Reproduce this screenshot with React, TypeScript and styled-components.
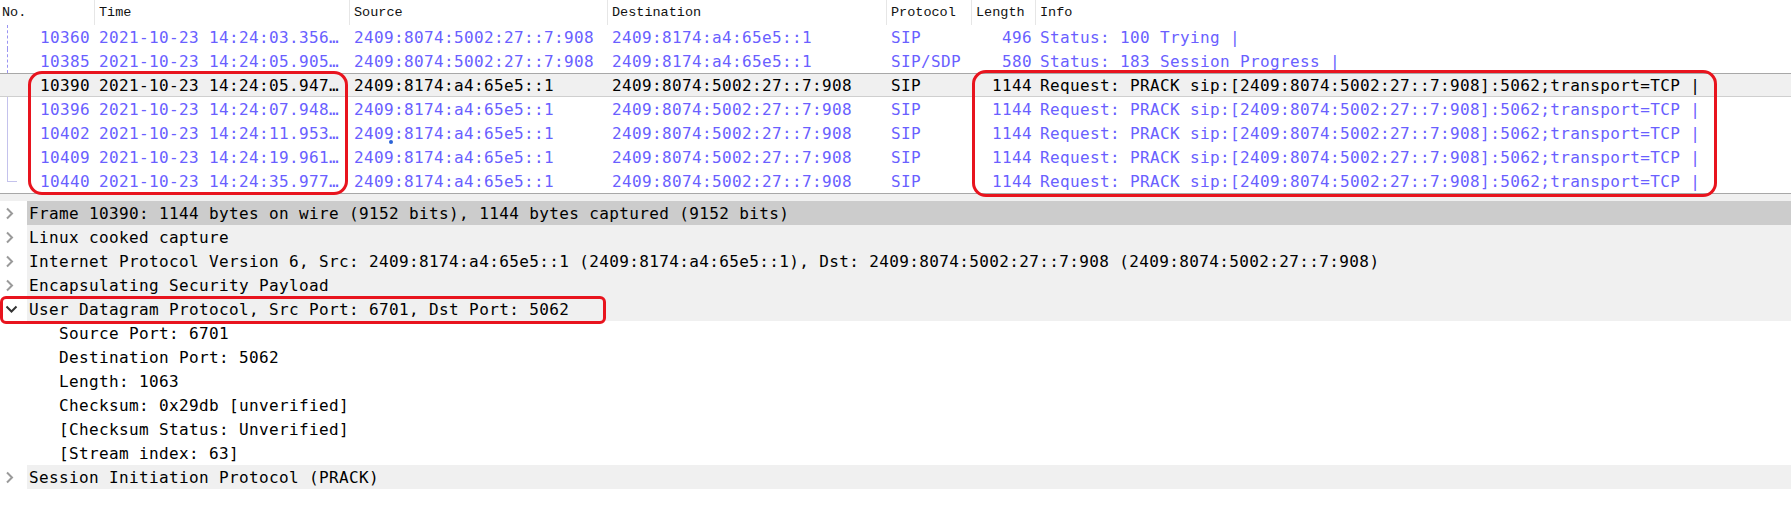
import React from 'react';
import styled, { createGlobalStyle } from 'styled-components';

const GlobalStyle = createGlobalStyle`
  html, body { margin: 0; padding: 0; background: #ffffff; }
  body { width: 1791px; height: 507px; overflow: hidden; }
`;

const MONO = `"DejaVu Sans Mono", "Liberation Mono", monospace`;
const COLS = '94px 255px 258px 279px 85px 64px 1fr';
const LINK = '#6a5fff';

const Page = styled.div`
  position: relative;
  width: 1791px;
  height: 507px;
  background: #ffffff;
  font-family: ${MONO};
  font-size: 16px;
  letter-spacing: 0.37px;
  overflow: hidden;
`;

const PacketList = styled.div`
  display: flex;
  flex-direction: column;
  border-bottom: 1px solid #a8a8a8;
`;

const HeaderRow = styled.div`
  display: grid;
  grid-template-columns: ${COLS};
  height: 25px;
`;

const HeaderCell = styled.div<{ $first?: boolean }>`
  display: flex;
  align-items: center;
  padding-left: ${(p) => (p.$first ? 2 : 4)}px;
  border-left: ${(p) => (p.$first ? 'none' : '1px solid #e6e6e6')};
  font-family: "Liberation Mono", monospace;
  font-size: 13.5px;
  letter-spacing: 0;
  color: #111;
`;

const PacketRow = styled.div<{ $selected?: boolean }>`
  display: grid;
  grid-template-columns: ${COLS};
  height: 24px;
  align-items: center;
  color: ${(p) => (p.$selected ? '#000' : LINK)};
  background: ${(p) => (p.$selected ? '#f0f0f0' : '#fff')};
  box-shadow: ${(p) =>
    p.$selected ? 'inset 0 1px 0 #a8a8a8, inset 0 -1px 0 #cfcfcf' : 'none'};
  white-space: pre;
`;

const Cell = styled.div<{ $right?: boolean }>`
  overflow: hidden;
  padding: 0 ${(p) => (p.$right ? 3 : 0)}px 0 ${(p) => (p.$right ? 0 : 5)}px;
  text-align: ${(p) => (p.$right ? 'right' : 'left')};
`;

const NoCell = styled.div`
  display: flex;
  align-self: stretch;
  align-items: center;
  padding-right: 4px;
`;

type Rel = 'dash' | 'solid' | 'end' | 'none';

const RelLine = styled.span<{ $kind: Rel }>`
  flex: none;
  width: 9px;
  margin-left: 7px;
  align-self: ${(p) => (p.$kind === 'end' ? 'flex-start' : 'stretch')};
  height: ${(p) => (p.$kind === 'end' ? '12px' : 'auto')};
  border-left: ${(p) =>
    p.$kind === 'dash'
      ? '1px dashed #9a94f2'
      : p.$kind === 'none'
      ? '1px solid transparent'
      : '1px solid #c4c2ec'};
  border-bottom: ${(p) => (p.$kind === 'end' ? '1px solid #c4c2ec' : 'none')};
`;

const Num = styled.span`
  flex: 1;
  text-align: right;
`;

const Splitter = styled.div`
  height: 7px;
  background: #f0f0f0;
`;

const DetailTree = styled.div`
  display: flex;
  flex-direction: column;
`;

const TreeRow = styled.div<{ $depth: number }>`
  display: flex;
  height: 24px;
  padding-left: ${(p) => p.$depth * 30}px;
  color: #000;
  white-space: pre;
`;

const Branch = styled.div`
  flex: none;
  width: 27px;
  display: flex;
  align-items: center;
  padding-left: 5px;
  box-sizing: border-box;
`;

type Tone = 'selected' | 'header' | 'plain';

const TreeLabel = styled.div<{ $tone: Tone }>`
  flex: 1;
  display: flex;
  align-items: center;
  padding-left: 2px;
  background: ${(p) =>
    p.$tone === 'selected' ? '#cccccc' : p.$tone === 'header' ? '#f0f0f0' : 'transparent'};
`;

const Mark = styled.div<{ $top: number; $left: number; $w: number; $h: number; $r: number }>`
  position: absolute;
  top: ${(p) => p.$top}px;
  left: ${(p) => p.$left}px;
  width: ${(p) => p.$w}px;
  height: ${(p) => p.$h}px;
  border: 3px solid #e8141e;
  border-radius: ${(p) => p.$r}px;
  box-sizing: border-box;
  pointer-events: none;
`;

const Dot = styled.div`
  position: absolute;
  top: 140px;
  left: 389px;
  width: 4px;
  height: 4px;
  border-radius: 50%;
  background: #2a62d6;
`;

const Collapsed = () => (
  <svg width="9" height="13" viewBox="0 0 9 13">
    <polyline points="2,1.5 7,6.5 2,11.5" fill="none" stroke="#9a9a9a" strokeWidth="2" />
  </svg>
);

const Expanded = () => (
  <svg width="13" height="9" viewBox="0 0 13 9">
    <polyline points="1.5,1.5 6.5,6.5 11.5,1.5" fill="none" stroke="#333" strokeWidth="2" />
  </svg>
);

type Packet = {
  no: number;
  time: string;
  src: string;
  dst: string;
  proto: string;
  len: number;
  info: string;
  rel: Rel;
  selected?: boolean;
};

const A = '2409:8074:5002:27::7:908';
const B = '2409:8174:a4:65e5::1';
const PRACK = 'Request: PRACK sip:[2409:8074:5002:27::7:908]:5062;transport=TCP |';

const packets: Packet[] = [
  { no: 10360, time: '2021-10-23 14:24:03.356…', src: A, dst: B, proto: 'SIP', len: 496, info: 'Status: 100 Trying |', rel: 'dash' },
  { no: 10385, time: '2021-10-23 14:24:05.905…', src: A, dst: B, proto: 'SIP/SDP', len: 580, info: 'Status: 183 Session Progress |', rel: 'dash' },
  { no: 10390, time: '2021-10-23 14:24:05.947…', src: B, dst: A, proto: 'SIP', len: 1144, info: PRACK, rel: 'none', selected: true },
  { no: 10396, time: '2021-10-23 14:24:07.948…', src: B, dst: A, proto: 'SIP', len: 1144, info: PRACK, rel: 'solid' },
  { no: 10402, time: '2021-10-23 14:24:11.953…', src: B, dst: A, proto: 'SIP', len: 1144, info: PRACK, rel: 'solid' },
  { no: 10409, time: '2021-10-23 14:24:19.961…', src: B, dst: A, proto: 'SIP', len: 1144, info: PRACK, rel: 'solid' },
  { no: 10440, time: '2021-10-23 14:24:35.977…', src: B, dst: A, proto: 'SIP', len: 1144, info: PRACK, rel: 'end' },
];

type Node = { text: string; depth: number; tone: Tone; branch: 'collapsed' | 'expanded' | 'none' };

const nodes: Node[] = [
  { text: 'Frame 10390: 1144 bytes on wire (9152 bits), 1144 bytes captured (9152 bits)', depth: 0, tone: 'selected', branch: 'collapsed' },
  { text: 'Linux cooked capture', depth: 0, tone: 'header', branch: 'collapsed' },
  { text: 'Internet Protocol Version 6, Src: 2409:8174:a4:65e5::1 (2409:8174:a4:65e5::1), Dst: 2409:8074:5002:27::7:908 (2409:8074:5002:27::7:908)', depth: 0, tone: 'header', branch: 'collapsed' },
  { text: 'Encapsulating Security Payload', depth: 0, tone: 'header', branch: 'collapsed' },
  { text: 'User Datagram Protocol, Src Port: 6701, Dst Port: 5062', depth: 0, tone: 'header', branch: 'expanded' },
  { text: 'Source Port: 6701', depth: 1, tone: 'plain', branch: 'none' },
  { text: 'Destination Port: 5062', depth: 1, tone: 'plain', branch: 'none' },
  { text: 'Length: 1063', depth: 1, tone: 'plain', branch: 'none' },
  { text: 'Checksum: 0x29db [unverified]', depth: 1, tone: 'plain', branch: 'none' },
  { text: '[Checksum Status: Unverified]', depth: 1, tone: 'plain', branch: 'none' },
  { text: '[Stream index: 63]', depth: 1, tone: 'plain', branch: 'none' },
  { text: 'Session Initiation Protocol (PRACK)', depth: 0, tone: 'header', branch: 'collapsed' },
];

const headers = ['No.', 'Time', 'Source', 'Destination', 'Protocol', 'Length', 'Info'];

export default function App() {
  return (
    <Page>
      <GlobalStyle />
      <PacketList>
        <HeaderRow>
          {headers.map((h, i) => (
            <HeaderCell key={h} $first={i === 0}>
              {h}
            </HeaderCell>
          ))}
        </HeaderRow>
        {packets.map((p) => (
          <PacketRow key={p.no} $selected={p.selected}>
            <NoCell>
              <RelLine $kind={p.rel} />
              <Num>{p.no}</Num>
            </NoCell>
            <Cell>{p.time}</Cell>
            <Cell>{p.src}</Cell>
            <Cell>{p.dst}</Cell>
            <Cell>{p.proto}</Cell>
            <Cell $right>{p.len}</Cell>
            <Cell>{p.info}</Cell>
          </PacketRow>
        ))}
      </PacketList>
      <Splitter />
      <DetailTree>
        {nodes.map((n, i) => (
          <TreeRow key={i} $depth={n.depth}>
            <Branch>
              {n.branch === 'collapsed' && <Collapsed />}
              {n.branch === 'expanded' && <Expanded />}
            </Branch>
            <TreeLabel $tone={n.tone}>{n.text}</TreeLabel>
          </TreeRow>
        ))}
      </DetailTree>
      <Mark $top={71} $left={28} $w={320} $h={124} $r={14} />
      <Mark $top={70} $left={972} $w={745} $h={127} $r={14} />
      <Mark $top={296} $left={0} $w={606} $h={28} $r={6} />
      <Dot />
    </Page>
  );
}
